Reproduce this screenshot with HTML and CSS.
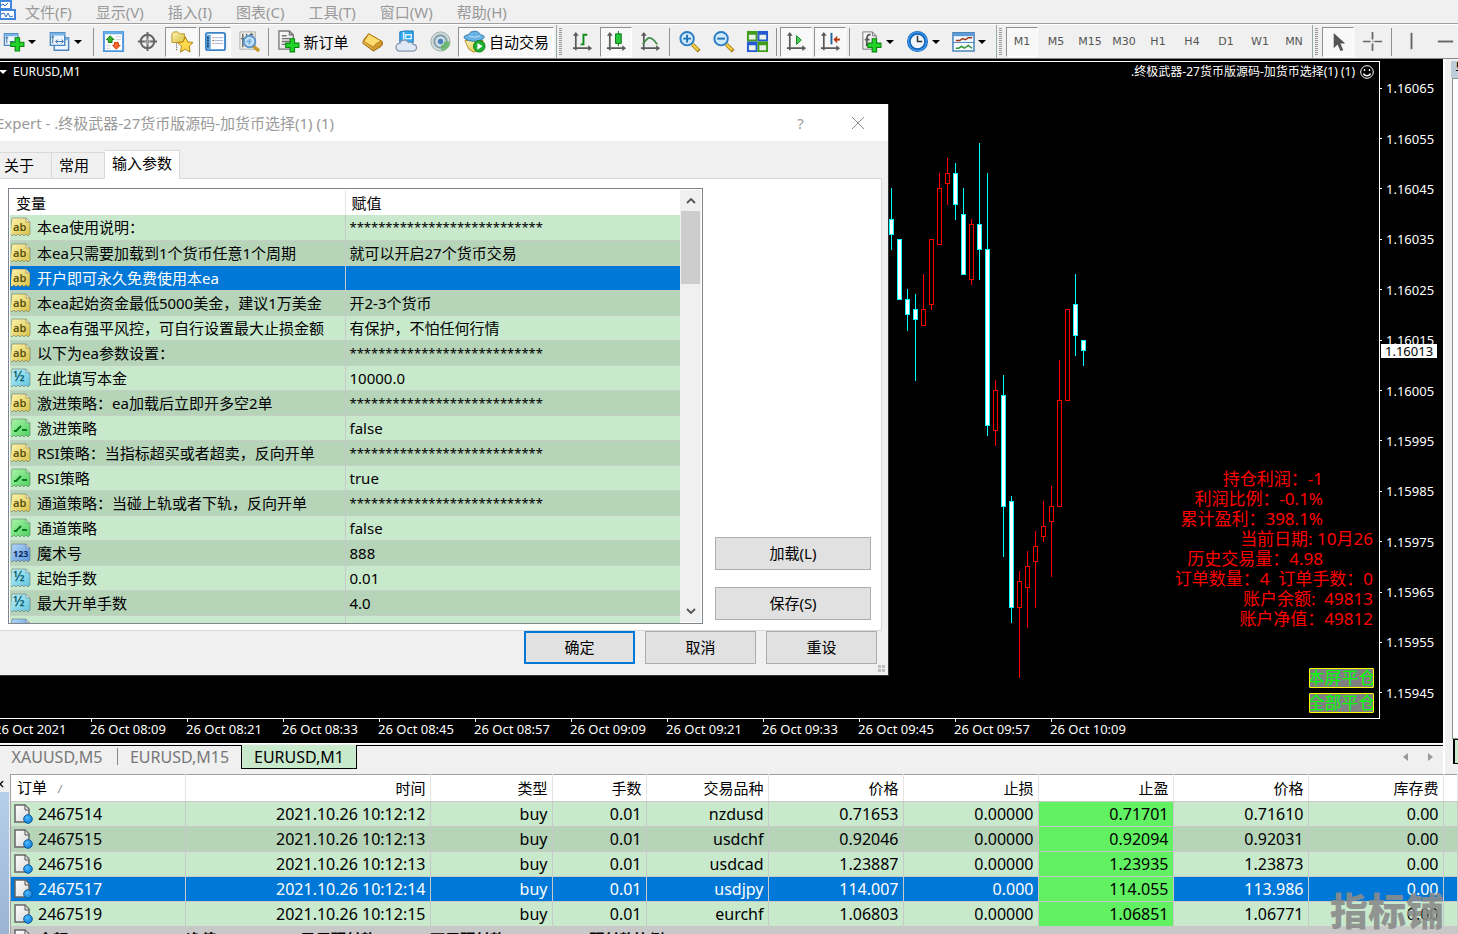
FILE: index.html
```html
<!DOCTYPE html>
<html lang="zh-CN">
<head>
    <meta charset="UTF-8">
    <meta name="viewport" content="width=device-width, initial-scale=1.0">
    <title>EURUSD,M1</title>
    <link rel="stylesheet" href="styles.css">
</head>
<body>

<!-- Icon set -->
<svg class="icon-defs" aria-hidden="true">
    <defs>
        <linearGradient id="g-yellow" x1="0" y1="0" x2="1" y2="1"><stop offset="0" stop-color="#fdf6b0"/><stop offset="1" stop-color="#d9bf45"/></linearGradient>
        <linearGradient id="g-cyan" x1="0" y1="0" x2="1" y2="1"><stop offset="0" stop-color="#c4f3fa"/><stop offset="1" stop-color="#5fc3dc"/></linearGradient>
        <linearGradient id="g-green" x1="0" y1="0" x2="1" y2="1"><stop offset="0" stop-color="#aef7ae"/><stop offset="1" stop-color="#4ccf5c"/></linearGradient>
        <linearGradient id="g-blue" x1="0" y1="0" x2="1" y2="1"><stop offset="0" stop-color="#b5dafa"/><stop offset="1" stop-color="#5a93da"/></linearGradient>
        <linearGradient id="g-gold" x1="0" y1="0" x2="1" y2="1"><stop offset="0" stop-color="#ffe27a"/><stop offset="1" stop-color="#c07f10"/></linearGradient>
        <radialGradient id="g-ball" cx=".4" cy=".35" r=".7"><stop offset="0" stop-color="#4fbcff"/><stop offset="1" stop-color="#0a7ad8"/></radialGradient>
        <linearGradient id="g-paper" x1="0" y1="0" x2="1" y2="1"><stop offset="0" stop-color="#fff"/><stop offset="1" stop-color="#d8d8d8"/></linearGradient>
    </defs>
    <symbol id="i-scrap" viewBox="0 0 20 20">
        <path d="M1 1h14l4 4v12l-2 2-2-2-2 2-2-2-2 2-2-2-2 2-2-2-2 2-2-2z" stroke-opacity=".45" stroke="#555"/>
        <path d="M15 1v4h4" fill="#fff" fill-opacity=".4" stroke="#555" stroke-opacity=".4"/>
    </symbol>
    <symbol id="i-bool" viewBox="0 0 20 20"><use href="#i-scrap" fill="url(#g-green)"/><path d="M3 13h2l5-5M11 12h5" fill="none" stroke="#0a7a1c" stroke-width="2"/></symbol>
    <symbol id="i-order" viewBox="0 0 20 20">
        <path d="M1 1h10l4 4v13H1z" fill="url(#g-paper)" stroke="#666" stroke-width="1.500"/><path d="M11 1v5h4" fill="#ddd" stroke="#555"/>
        <circle cx="14" cy="15" r="4.300" fill="url(#g-ball)" stroke="#0c5c9c"/>
    </symbol>
    <symbol id="i-plus" viewBox="0 0 14 14"><path d="M5 1h4v4h4v4H9v4H5V9H1V5h4z" fill="#22d32a" stroke="#08860f"/></symbol>
    <symbol id="i-caret" viewBox="0 0 8 4"><path d="M0 0h8L4 4z" fill="#000"/></symbol>
    <symbol id="i-axes" viewBox="0 0 24 24"><path d="M5 4v17M2 19h18" fill="none" stroke="#5a5a5a" stroke-width="1.800"/><path d="M2 6l3-4 3 4zM18 16l4 3-4 3z" fill="#5a5a5a"/></symbol>
    <symbol id="i-lens" viewBox="0 0 24 24"><path d="M15 15l7 7" stroke="#9c7312" stroke-width="4"/><path d="M15 15l6 6" stroke="#f5cf3e" stroke-width="2.400"/><circle cx="9.500" cy="9" r="7" fill="#cdeafd" stroke="#2b7cc4" stroke-width="2"/></symbol>
    <symbol id="i-frame" viewBox="0 0 18 16"><path d="M1 1h16v14H1z" fill="#eef6ff" stroke="#4d86bd" stroke-width="1.600"/><path d="M1 2.500h16" stroke="#78b4ea" stroke-width="3"/></symbol>
</svg>

<nav class="menubar">
    <svg class="app-logo" viewBox="0 0 16 20"><path d="M0 1h11v8H0zM0 10h15v9H0z" fill="#fff" stroke="#3f86dc" stroke-width="2"/><path d="M0 6l3-2 2 2 3-3M1 14l3-1 2 4 2-4 2 4 3-1" fill="none" stroke="#2f74cc"/></svg>
    <button>文件(F)</button>
    <button>显示(V)</button>
    <button>插入(I)</button>
    <button>图表(C)</button>
    <button>工具(T)</button>
    <button>窗口(W)</button>
    <button>帮助(H)</button>
</nav>

<div class="toolbar">
    <button class="tool drop" aria-label="新图表"><svg viewBox="0 0 24 24"><use href="#i-frame" x="1" y="3" width="17" height="14"/><path d="M5 7v7M4 9l1-2 1 2M8 12h5" stroke="#3b6f9f" fill="none"/><use href="#i-plus" x="8" y="7" width="16" height="16"/></svg><svg class="caret"><use href="#i-caret"/></svg></button>
    <button class="tool drop" aria-label="图表配置"><svg viewBox="0 0 24 24"><use href="#i-frame" x="5" y="7" width="18" height="15"/><use href="#i-frame" x="1" y="2" width="18" height="15"/><path d="M5 6v8M4 8l1-2 1 2M8 12h8M10 10l-2 2 2 2M14 10l2 2-2 2" stroke="#3b6f9f" fill="none"/></svg><svg class="caret"><use href="#i-caret"/></svg></button>
    <span class="sep"></span>
    <button class="tool" aria-label="市场报价"><svg viewBox="0 0 24 24"><path d="M2 2h20v20H2z" fill="#fff" stroke="#4d96dc" stroke-width="2"/><path d="M2 3h20" stroke="#66aeea" stroke-width="3"/><path d="M14 7h6M14 10h6M4 16h5M4 19h5" stroke="#ccc"/><path d="M8.500 6l4 4h-2v3h-4v-3h-2z" fill="#36b329" stroke="#177b10"/><path d="M15 20l-4-4h2v-3h4v3h2z" fill="#ff6a2a" stroke="#c93b08"/></svg></button>
    <button class="tool" aria-label="数据窗口"><svg viewBox="0 0 24 24"><circle cx="12" cy="12" r="7" fill="none" stroke="#666" stroke-width="2.200"/><path d="M12 2v20M2 12h20" stroke="#666" stroke-width="2"/><path d="M12 9v6M9 12h6" stroke="#aaa"/></svg></button>
    <button class="tool on" aria-label="导航"><svg viewBox="0 0 24 24"><path d="M2 4l2-2h4l2 2h5v9H2z" fill="url(#g-yellow)" stroke="#b99521"/><path d="M7 14v8" stroke="#333" stroke-dasharray="1 1"/><path d="M16 7l2.500 5.500 5.500.5-4 4 1 6-5-3-5 3 1-6-4-4 5.500-.5z" fill="#ffd94a" stroke="#a87b10"/></svg></button>
    <button class="tool on" aria-label="终端"><svg viewBox="0 0 24 24"><rect x="2" y="3" width="20" height="18" rx="2" fill="#fff" stroke="#3d85c8" stroke-width="2"/><path d="M2 5h5v15H3z" fill="#5fa3de"/><path d="M4 7v11" stroke="#174672" stroke-width="2" stroke-dasharray="2 1"/><path d="M11 8h9M11 11h9M11 14h9" stroke="#aab4d8"/><path d="M9 8h1M9 14h1" stroke="#e22"/><path d="M9 11h1" stroke="#111"/></svg></button>
    <button class="tool" aria-label="策略测试"><svg viewBox="0 0 24 24"><path d="M2 2h16v18H2z" fill="#f2f2ee" stroke="#aaa"/><path d="M5 4v14M9 4v5M14 3v6M3 9h5M12 5h4" stroke="#666" stroke-width="1.500"/><path d="M15 16l7 6" stroke="#c99a24" stroke-width="3.500"/><circle cx="12" cy="12" r="6" fill="#bde0fa" fill-opacity=".85" stroke="#5b96ca" stroke-width="2"/><path d="M9 12h5M12 9v6" stroke="#79aeda" stroke-width="2"/></svg></button>
    <span class="sep"></span>
    <button class="tool text order"><svg viewBox="0 0 24 24"><path d="M2 1h11l4 4v15H2z" fill="url(#g-paper)" stroke="#777" stroke-width="1.400"/><path d="M13 1v4h4M5 6h5M5 9h9M5 12h9M5 15h5" fill="none" stroke="#777" stroke-width="1.400"/><use href="#i-plus" x="8" y="8" width="16" height="16"/></svg>新订单</button>
    <button class="tool" aria-label="MetaEditor"><svg viewBox="0 0 24 24"><path d="M8 4l14 8c1 2 0 4-1 5l-8 5L2 14c0-1 0-3 1-4z" fill="url(#g-gold)" stroke="#9a6206"/><path d="M8 4l-5 8 10 6c1-3 5-6 9-6z" fill="#ffdc70" stroke="#b37a10"/></svg></button>
    <button class="tool" aria-label="社区"><svg viewBox="0 0 24 24"><path d="M5 2l5-1h9v12H5z" fill="#35a8ef" stroke="#1777b8"/><path d="M9 2v10M11 5h6v4h-6z" stroke="#d9f1ff" fill="none" stroke-width="1.500"/><path d="M5 22a4 4 0 0 1 0-8 5 5 0 0 1 9-1 4 4 0 0 1 5 2 3.500 3.500 0 0 1 0 7z" fill="#dfe8f5" stroke="#8594b0" stroke-width="1.300"/></svg></button>
    <button class="tool" aria-label="信号"><svg viewBox="0 0 24 24"><circle cx="12" cy="12" r="10" fill="#d5dcd9" stroke="#9aaeae"/><circle cx="12" cy="12" r="6.500" fill="none" stroke="#7f9fae" stroke-width="2"/><path d="M12 12l1 10a10 10 0 0 0 9-10z" fill="#5bb55d" fill-opacity=".8"/><circle cx="12" cy="12" r="3.500" fill="#4b80ba" stroke="#d8ebf5"/></svg></button>
    <button class="tool text on auto"><svg viewBox="0 0 24 24"><path d="M2 11h19l-3 10-7 2-5-3z" fill="url(#g-yellow)" stroke="#b58b22"/><path d="M1 8c0-2 3-3 5-3 1-5 11-5 12 0 3 0 5 2 4 3-4 5-17 5-21 0z" fill="#69b3e4" stroke="#3578ac"/><path d="M6 6c4 2 8 2 12 0" fill="none" stroke="#bde4fb"/><circle cx="17" cy="17" r="6" fill="#1fae2e" stroke="#0c7d18"/><path d="M15 13.500v7l5.500-3.500z" fill="#fff"/></svg>自动交易</button>
    <span class="group-end"></span><span class="grip"></span>
    <button class="tool" aria-label="柱状图"><svg viewBox="0 0 24 24"><use href="#i-axes"/><path d="M13 16V5h4M10 15h3" fill="none" stroke="#0d8a1b" stroke-width="2"/></svg></button>
    <button class="tool on" aria-label="蜡烛图"><svg viewBox="0 0 24 24"><use href="#i-axes"/><path d="M14 1v16" stroke="#0a7a16"/><path d="M11 4h6v10h-6z" fill="#28c73b" stroke="#0a7a16"/></svg></button>
    <button class="tool" aria-label="折线图"><svg viewBox="0 0 24 24"><use href="#i-axes"/><path d="M4 15c5-8 8-10 15 0" fill="none" stroke="#3f8d45" stroke-width="1.800"/></svg></button>
    <span class="sep"></span>
    <button class="tool" aria-label="放大"><svg viewBox="0 0 24 24"><use href="#i-lens"/><path d="M5.500 9h8M9.500 5v8" stroke="#2371b5" stroke-width="2"/></svg></button>
    <button class="tool" aria-label="缩小"><svg viewBox="0 0 24 24"><use href="#i-lens"/><path d="M5.500 9h8" stroke="#2371b5" stroke-width="2"/></svg></button>
    <button class="tool" aria-label="平铺"><svg viewBox="0 0 24 24"><path d="M1 1h11v11H1z" fill="#3f9d18"/><path d="M12 1h11v11H12z" fill="#2459d2"/><path d="M1 12h11v11H1z" fill="#2459d2"/><path d="M12 12h11v11H12z" fill="#3f9d18"/><path d="M3 5h7v5H3zM14 5h7v5h-7zM3 16h7v5H3zM14 16h7v5h-7z" fill="#e8f2e8"/></svg></button>
    <span class="sep"></span>
    <button class="tool on" aria-label="自动滚动"><svg viewBox="0 0 24 24"><use href="#i-axes"/><path d="M12 6v9l5-4.500z" fill="#4fca5a" stroke="#0d8a1b"/></svg></button>
    <button class="tool on" aria-label="图表平移"><svg viewBox="0 0 24 24"><use href="#i-axes"/><path d="M13 3v12" stroke="#22669c" stroke-width="2"/><path d="M22 10h-5" stroke="#b53a11" stroke-width="2"/><path d="M15 10l4-4v8z" fill="#b53a11"/></svg></button>
    <span class="sep"></span>
    <div class="dropdowns">
        <button class="tool drop" aria-label="指标"><svg viewBox="0 0 24 24"><path d="M3 2h10l4 4v14H3z" fill="url(#g-paper)" stroke="#777"/><path d="M13 2v4h4" fill="none" stroke="#777"/><path d="M11 5c-4-1-4 3-4 12M5 10h5" fill="none" stroke="#555" stroke-width="1.800"/><use href="#i-plus" x="7" y="8" width="16" height="16"/></svg><svg class="caret"><use href="#i-caret"/></svg></button>
        <button class="tool drop" aria-label="周期"><svg viewBox="0 0 24 24"><circle cx="12" cy="12" r="9" fill="#f2f7fc" stroke="#1464b8" stroke-width="4"/><circle cx="12" cy="12" r="9.500" fill="none" stroke="#3b9af0" stroke-width="1.500"/><path d="M12 6v6h5" fill="none" stroke="#333" stroke-width="1.600"/></svg><svg class="caret"><use href="#i-caret"/></svg></button>
        <button class="tool drop" aria-label="模板"><svg viewBox="0 0 24 24"><path d="M1 3h22v19H1z" fill="#f6faff" stroke="#4a86bd" stroke-width="1.600"/><path d="M1 5h22" stroke="#5c9bd6" stroke-width="3"/><path d="M1 13h22" stroke="#4a86bd"/><path d="M4 11h4l3-2 3 1 3-2h4" fill="none" stroke="#a33518" stroke-width="1.500"/><path d="M4 19h3l3-2 3 2 4-3 4 3" fill="none" stroke="#2f9337" stroke-width="1.500"/></svg><svg class="caret"><use href="#i-caret"/></svg></button>
    </div>
    <span class="group-end"></span><span class="grip"></span>
    <button class="tool period on">M1</button>
    <button class="tool period">M5</button>
    <button class="tool period">M15</button>
    <button class="tool period">M30</button>
    <button class="tool period">H1</button>
    <button class="tool period">H4</button>
    <button class="tool period">D1</button>
    <button class="tool period">W1</button>
    <button class="tool period">MN</button>
    <span class="group-end"></span><span class="grip"></span>
    <button class="tool on" aria-label="光标"><svg viewBox="0 0 24 24"><path d="M7 3v16l4-4 3 7 3-1-3-7h5z" fill="#555"/></svg></button>
    <button class="tool" aria-label="十字准线"><svg viewBox="0 0 24 24"><path d="M12 2v8M12 14v8M2 12h8M14 12h8M12 12h1" stroke="#666" stroke-width="1.800"/></svg></button>
    <span class="sep"></span>
    <button class="tool" aria-label="垂直线"><svg viewBox="0 0 24 24"><path d="M12 3v17" stroke="#666" stroke-width="2"/></svg></button>
    <button class="tool" aria-label="水平线"><svg viewBox="0 0 24 24"><path d="M4 12h16" stroke="#666" stroke-width="2"/></svg></button>
</div>

<main class="workspace">
    <div class="charts">
        <section class="chart">
            <div class="plot">
                <svg id="candles" class="candles"></svg>
                <header class="plot-head">
                    <span class="symbol"><svg viewBox="0 0 8 4"><path d="M0 0h8L4 4z" fill="#fff"/></svg>EURUSD,M1</span>
                    <span class="expert">.终极武器-27货币版源码-加货币选择(1) (1)<svg viewBox="0 0 14 14"><circle cx="7" cy="7" r="6.300" fill="none" stroke="#fff"/><path d="M4.500 4v2M9.500 4v2M3.500 8.500c1 3 6 3 7 0" fill="none" stroke="#fff" stroke-width="1.300"/></svg></span>
                </header>
                <ul class="stats">
                    <li class="inset">持仓利润：-1</li>
                    <li class="inset">利润比例：-0.1%</li>
                    <li class="inset">累计盈利：398.1%</li>
                    <li>当前日期: 10月26</li>
                    <li class="inset">历史交易量：4.98</li>
                    <li>订单数量：4&nbsp; 订单手数：0</li>
                    <li>账户余额:&nbsp; 49813</li>
                    <li>账户净值：49812</li>
                </ul>
                <div class="close-buttons">
                    <button>本屏平仓</button>
                    <button>全部平仓</button>
                </div>
            </div>
            <ul class="price-axis">
                <li>1.16065</li><li>1.16055</li><li>1.16045</li><li>1.16035</li><li>1.16025</li><li>1.16015</li><li>1.16005</li>
                <li>1.15995</li><li>1.15985</li><li>1.15975</li><li>1.15965</li><li>1.15955</li><li>1.15945</li>
                <li class="bid">1.16013</li>
            </ul>
            <ul class="time-axis">
                <li>26 Oct 2021</li><li>26 Oct 08:09</li><li>26 Oct 08:21</li><li>26 Oct 08:33</li><li>26 Oct 08:45</li><li>26 Oct 08:57</li>
                <li>26 Oct 09:09</li><li>26 Oct 09:21</li><li>26 Oct 09:33</li><li>26 Oct 09:45</li><li>26 Oct 09:57</li><li>26 Oct 10:09</li>
            </ul>
        </section>
        <div class="chart-tabs">
            <button>XAUUSD,M5</button>
            <button>EURUSD,M15</button>
            <button class="active">EURUSD,M1</button>
            <div class="tab-scroll">
                <svg viewBox="0 0 5 8"><path d="M5 0v8L0 4z" fill="#999"/></svg>
                <svg viewBox="0 0 5 8"><path d="M0 0v8l5-4z" fill="#999"/></svg>
            </div>
        </div>
    </div>
    <aside class="navigator">
        <div class="navigator-title">导航</div>
        <div class="navigator-body"></div>
        <div class="navigator-tab"></div>
    </aside>

    <section class="dialog" role="dialog" aria-label="Expert">
        <header class="dialog-title">
            <span>Expert - .终极武器-27货币版源码-加货币选择(1) (1)</span>
            <button aria-label="帮助">?</button>
            <button aria-label="关闭"><svg viewBox="0 0 12 12"><path d="M0 0l12 12M12 0L0 12" stroke="#8a8a8a"/></svg></button>
        </header>
        <div class="dialog-tabs">
            <button>关于</button>
            <button>常用</button>
            <button class="active">输入参数</button>
        </div>
        <div class="dialog-page">
            <div class="inputs">
                <table>
                    <colgroup><col class="c-name"><col></colgroup>
                    <thead><tr><th>变量</th><th>赋值</th></tr></thead>
                    <tbody>
                        <tr><td><svg class="ab"><use href="#i-scrap"/><text x="2" y="14">ab</text></svg>本ea使用说明：</td><td class="stars">***************************</td></tr>
                        <tr><td><svg class="ab"><use href="#i-scrap"/><text x="2" y="14">ab</text></svg>本ea只需要加载到1个货币任意1个周期</td><td>就可以开启27个货币交易</td></tr>
                        <tr class="selected"><td><svg class="ab"><use href="#i-scrap"/><text x="2" y="14">ab</text></svg>开户即可永久免费使用本ea</td><td></td></tr>
                        <tr><td><svg class="ab"><use href="#i-scrap"/><text x="2" y="14">ab</text></svg>本ea起始资金最低5000美金，建议1万美金</td><td>开2-3个货币</td></tr>
                        <tr><td><svg class="ab"><use href="#i-scrap"/><text x="2" y="14">ab</text></svg>本ea有强平风控，可自行设置最大止损金额</td><td>有保护，不怕任何行情</td></tr>
                        <tr><td><svg class="ab"><use href="#i-scrap"/><text x="2" y="14">ab</text></svg>以下为ea参数设置：</td><td class="stars">***************************</td></tr>
                        <tr><td><svg class="half"><use href="#i-scrap"/><text x="2" y="13">½</text></svg>在此填写本金</td><td>10000.0</td></tr>
                        <tr><td><svg class="ab"><use href="#i-scrap"/><text x="2" y="14">ab</text></svg>激进策略：ea加载后立即开多空2单</td><td class="stars">***************************</td></tr>
                        <tr><td><svg><use href="#i-bool"/></svg>激进策略</td><td>false</td></tr>
                        <tr><td><svg class="ab"><use href="#i-scrap"/><text x="2" y="14">ab</text></svg>RSI策略：当指标超买或者超卖，反向开单</td><td class="stars">***************************</td></tr>
                        <tr><td><svg><use href="#i-bool"/></svg>RSI策略</td><td>true</td></tr>
                        <tr><td><svg class="ab"><use href="#i-scrap"/><text x="2" y="14">ab</text></svg>通道策略：当碰上轨或者下轨，反向开单</td><td class="stars">***************************</td></tr>
                        <tr><td><svg><use href="#i-bool"/></svg>通道策略</td><td>false</td></tr>
                        <tr><td><svg class="int"><use href="#i-scrap"/><text x="2" y="14">123</text></svg>魔术号</td><td>888</td></tr>
                        <tr><td><svg class="half"><use href="#i-scrap"/><text x="2" y="13">½</text></svg>起始手数</td><td>0.01</td></tr>
                        <tr><td><svg class="half"><use href="#i-scrap"/><text x="2" y="13">½</text></svg>最大开单手数</td><td>4.0</td></tr>
                        <tr><td><svg class="int"><use href="#i-scrap"/></svg></td><td></td></tr>
                    </tbody>
                </table>
                <div class="scrollbar">
                    <svg viewBox="0 0 10 6"><path d="M1 5l4-4 4 4" fill="none" stroke="#555" stroke-width="1.800"/></svg>
                    <span class="thumb"></span>
                    <svg viewBox="0 0 10 6"><path d="M1 1l4 4 4-4" fill="none" stroke="#555" stroke-width="1.800"/></svg>
                </div>
            </div>
            <div class="side-buttons">
                <button class="btn">加载(L)</button>
                <button class="btn">保存(S)</button>
            </div>
        </div>
        <footer class="dialog-buttons">
            <button class="btn default">确定</button>
            <button class="btn">取消</button>
            <button class="btn">重设</button>
        </footer>
        <svg class="size-grip" viewBox="0 0 8 8"><path d="M0 0h3v3H0zM4 0h3v3H4zM0 4h3v3H0zM4 4h3v3H4z" fill="#bfbfbf"/></svg>
    </section>
</main>

<section class="terminal">
    <div class="terminal-side"><button aria-label="关闭"><svg viewBox="0 0 8 8"><path d="M0 0l7 7M7 0L0 7" stroke="#000" stroke-width="1.500"/></svg></button><span></span></div>
    <table class="orders">
        <colgroup><col class="w-order"><col class="w-time"><col class="w-type"><col class="w-lots"><col class="w-type"><col class="w-price"><col class="w-price"><col class="w-price"><col class="w-price"><col class="w-price"><col></colgroup>
        <thead>
            <tr><th>订单<i>/</i></th><th>时间</th><th>类型</th><th>手数</th><th>交易品种</th><th>价格</th><th>止损</th><th>止盈</th><th>价格</th><th>库存费</th><th></th></tr>
        </thead>
        <tbody>
            <tr><td><svg><use href="#i-order"/></svg>2467514</td><td>2021.10.26 10:12:12</td><td>buy</td><td>0.01</td><td>nzdusd</td><td>0.71653</td><td>0.00000</td><td class="tp">0.71701</td><td>0.71610</td><td>0.00</td><td></td></tr>
            <tr><td><svg><use href="#i-order"/></svg>2467515</td><td>2021.10.26 10:12:13</td><td>buy</td><td>0.01</td><td>usdchf</td><td>0.92046</td><td>0.00000</td><td class="tp">0.92094</td><td>0.92031</td><td>0.00</td><td></td></tr>
            <tr><td><svg><use href="#i-order"/></svg>2467516</td><td>2021.10.26 10:12:13</td><td>buy</td><td>0.01</td><td>usdcad</td><td>1.23887</td><td>0.00000</td><td class="tp">1.23935</td><td>1.23873</td><td>0.00</td><td></td></tr>
            <tr class="selected"><td><svg><use href="#i-order"/></svg>2467517</td><td>2021.10.26 10:12:14</td><td>buy</td><td>0.01</td><td>usdjpy</td><td>114.007</td><td>0.000</td><td class="tp">114.055</td><td>113.986</td><td>0.00</td><td></td></tr>
            <tr><td><svg><use href="#i-order"/></svg>2467519</td><td>2021.10.26 10:12:15</td><td>buy</td><td>0.01</td><td>eurchf</td><td>1.06803</td><td>0.00000</td><td class="tp">1.06851</td><td>1.06771</td><td>0.00</td><td></td></tr>
        </tbody>
        <tfoot>
            <tr><td colspan="11"><svg><use href="#i-order"/></svg>余额: 49 813.11 USD&nbsp; 净值: 49 811.99&nbsp; 已用预付款: 50.00&nbsp; 可用预付款: 49 761.99&nbsp; 预付款比例: 99623.78%</td></tr>
        </tfoot>
    </table>
    <div class="watermark">指标铺</div>
</section>

<script>
// x, high, body top, body bottom, low, direction
const candles = [
    [891, 126, 157, 173, 188, "down"],
    [899, 177, 177, 238, 238, "down"],
    [907, 227, 237, 253, 269, "down"],
    [915, 232, 247, 258, 319, "down"],
    [923, 212, 247, 264, 264, "up"],
    [931, 177, 177, 243, 248, "up"],
    [939, 111, 126, 183, 183, "up"],
    [947, 96, 111, 122, 143, "up"],
    [955, 101, 111, 143, 158, "down"],
    [963, 126, 152, 213, 213, "down"],
    [971, 157, 162, 218, 223, "up"],
    [979, 81, 162, 188, 218, "down"],
    [987, 111, 187, 364, 374, "down"],
    [995, 318, 328, 369, 384, "up"],
    [1003, 313, 333, 445, 495, "down"],
    [1011, 434, 439, 546, 561, "down"],
    [1019, 509, 519, 546, 616, "up"],
    [1027, 489, 504, 526, 566, "up"],
    [1035, 469, 484, 500, 546, "up"],
    [1043, 439, 464, 475, 480, "up"],
    [1051, 424, 444, 460, 515, "up"],
    [1059, 298, 338, 445, 445, "up"],
    [1067, 247, 247, 339, 339, "up"],
    [1075, 212, 242, 274, 294, "down"],
    [1083, 278, 278, 289, 304, "down"]
];

function drawCandles() {
    let shapes = "";
    candles.forEach(([x, high, top, bottom, low, dir]) => {
        shapes += `<g class="${dir}"><path d="M${x + 0.5} ${high}V${low}"/><rect x="${x - 1.5}" y="${top + 0.5}" width="4" height="${bottom - top - 1}"/></g>`;
    });
    document.getElementById("candles").innerHTML = shapes;
}

drawCandles();
</script>

</body>
</html>
```
FILE: styles.css
```css
* {
    box-sizing: border-box;
}
body {
    margin: 0;
    height: 100vh;
    display: flex;
    flex-direction: column;
    overflow: hidden;
    background: #f0f0f0;
    color: #000;
    font-family: "Noto Sans", "Noto Sans CJK SC", sans-serif;
    font-size: 15px;
    line-height: 20px;
}
button {
    margin: 0;
    padding: 0;
    border: none;
    background: none;
    color: inherit;
    font: inherit;
    white-space: nowrap;
}
ul {
    margin: 0;
    padding: 0;
    list-style: none;
}
.icon-defs {
    position: absolute;
    width: 0;
    height: 0;
}

/* Menu */
.menubar {
    display: flex;
    flex: none;
    gap: 24px;
    height: 24px;
    border-bottom: 1px solid #a0a0a0;
    color: #999;
}
.app-logo {
    width: 16px;
    height: 20px;
    margin-right: -15px;
}

/* Toolbar */
.toolbar {
    display: flex;
    flex: none;
    align-items: center;
    gap: 2px;
    height: 35px;
    border-top: 1px solid #fff;
    border-bottom: 1px solid #888;
    overflow: hidden;
}
.tool {
    display: flex;
    flex: none;
    align-items: center;
    justify-content: center;
    width: 32px;
    height: 30px;
}
.tool svg {
    flex: none;
    width: 23px;
    height: 23px;
}
.tool.on {
    border: 1px solid;
    border-color: #909090 #fff #fff #909090;
    background: #f8f8f8;
}
.tool.drop {
    justify-content: flex-start;
    gap: 3px;
    width: 44px;
    padding-left: 2px;
}
.tool .caret {
    width: 8px;
    height: 4px;
}
.tool.text {
    gap: 3px;
}
.order {
    width: 82px;
}
.auto {
    width: 96px;
}
.tool.period {
    color: #555;
    font-family: "DejaVu Sans", sans-serif;
    font-size: 11px;
}
.dropdowns {
    display: flex;
    flex: none;
    gap: 2px;
    padding-left: 5px;
}
.sep {
    flex: none;
    width: 1px;
    height: 28px;
    margin: 0 1px;
    background: #909090;
}
.group-end {
    flex: none;
    width: 1px;
    height: 34px;
    background: #9aaa9c;
}
.grip {
    flex: none;
    width: 3px;
    height: 28px;
    margin-right: 2px;
    background: repeating-linear-gradient(#999 0 1px, #f0f0f0 1px 2px);
}

/* Workspace */
.workspace {
    position: relative;
    display: flex;
    flex: 1;
    min-height: 0;
}
.charts {
    display: flex;
    flex: 1;
    flex-direction: column;
    min-width: 0;
}
.chart {
    display: grid;
    flex: 1;
    grid-template-columns: 1fr 63px;
    grid-template-rows: 1fr 24px;
    min-height: 0;
    padding-top: 2px;
    background: #000;
    color: #fff;
    font-size: 13px;
    overflow: hidden;
}
.plot {
    position: relative;
    display: flex;
    flex-direction: column;
    align-items: flex-end;
    min-height: 0;
    padding: 0 5px 5px 0;
    border: solid #fff;
    border-width: 1px 1px 1px 0;
}
.candles {
    position: absolute;
    inset: 0;
    width: 100%;
    height: 100%;
}
.candles .down {
    stroke: #0ff;
    fill: #fff;
}
.candles .up {
    stroke: #f00;
    fill: #000;
}
.plot-head {
    display: flex;
    justify-content: space-between;
    width: 100%;
    font-size: 12px;
}
.symbol svg {
    width: 8px;
    height: 4px;
    margin: 0 6px 2px -1px;
}
.expert svg {
    width: 14px;
    height: 14px;
    margin-left: 5px;
    vertical-align: -3px;
}
.stats {
    margin-top: auto;
    padding-right: 1px;
    color: #f00;
    font-size: 17px;
    line-height: 20px;
    text-align: right;
}
.stats .inset {
    padding-right: 50px;
}
.close-buttons {
    display: flex;
    flex-direction: column;
    gap: 5px;
    margin-top: 39px;
}
.close-buttons button {
    display: flex;
    justify-content: center;
    width: 65px;
    height: 20px;
    border: 1px solid #ff0;
    border-radius: 1px;
    background: #808080;
    color: #0f0;
    font-size: 17px;
    line-height: 18px;
    overflow: hidden;
}
.price-axis {
    position: relative;
    display: flex;
    flex-direction: column;
    padding: 2px 0 1px;
}
.price-axis li {
    display: flex;
    flex: 1;
    align-items: center;
    gap: 4px;
}
.price-axis li::before {
    content: "";
    width: 2px;
    height: 1px;
    background: #fff;
}
.price-axis .bid {
    position: absolute;
    top: 43%;
    left: 1px;
    padding: 0 4px;
    height: 14px;
    background: #fff;
    color: #000;
}
.price-axis .bid::before {
    display: none;
}
.time-axis {
    display: flex;
    grid-column: 1 / -1;
    margin-left: -6px;
    line-height: 21px;
}
.time-axis li {
    position: relative;
    flex: none;
    width: 96px;
    white-space: nowrap;
}
.time-axis li::before {
    position: absolute;
    top: 0;
    left: 1px;
    width: 1px;
    height: 3px;
    background: #fff;
    content: "";
}
.chart-tabs {
    display: flex;
    flex: none;
    height: 31px;
    padding-bottom: 5px;
    border-top: 1px solid #fff;
    background: linear-gradient(#000 0 0) 0 1px / 100% 1px no-repeat, #f0f0f0;
    color: #777;
    font-size: 16px;
}
.chart-tabs button {
    width: 123px;
}
.chart-tabs button:first-child {
    width: 118px;
    padding-right: 4px;
    border: solid transparent;
    border-width: 4px 0;
    background: linear-gradient(#888 0 0) right / 1px 100% no-repeat;
    background-clip: padding-box;
    line-height: 16px;
}
.chart-tabs .active {
    width: 116px;
    margin-top: 1px;
    border: 1px solid #000;
    border-top: none;
    background: #c9e9cd;
    color: #000;
}
.tab-scroll {
    display: flex;
    gap: 20px;
    align-items: center;
    margin-left: auto;
    padding-right: 10px;
}
.tab-scroll svg {
    width: 5px;
    height: 8px;
}

/* Docked panel at the right edge */
.navigator {
    display: flex;
    flex: none;
    flex-direction: column;
    width: 15px;
    padding: 2px 0 10px 7px;
    border-left: 2px solid #fff;
    overflow: hidden;
}
.navigator-title {
    flex: none;
    height: 17px;
    margin-left: -1px;
    padding-left: 4px;
    background: #bfcddb;
    line-height: 14px;
    white-space: nowrap;
    overflow: hidden;
}
.navigator-body {
    flex: 1;
    border: solid #8a968c;
    border-width: 1px 0 1px 1px;
    background: #fff;
}
.navigator-tab {
    flex: none;
    height: 25px;
    margin-left: 1px;
    border: solid #000;
    border-width: 1px 0 1px 2px;
    background: #c9e9cd;
}

/* Expert dialog */
.dialog {
    position: absolute;
    top: 45px;
    left: -8px;
    width: 897px;
    border: solid #333;
    border-width: 0 1px 1px 0;
    background: #f0f0f0;
}
.dialog-title {
    display: flex;
    align-items: center;
    height: 37px;
    padding: 0 2px 0 4px;
    background: #fff;
    color: #999;
}
.dialog-title span {
    flex: 1;
}
.dialog-title button {
    width: 57px;
}
.dialog-title svg {
    width: 12px;
    height: 12px;
}
.dialog-tabs {
    display: flex;
    align-items: flex-end;
    height: 37px;
}
.dialog-tabs button {
    width: 53px;
    height: 26px;
    padding: 0 8px 2px 0;
    border: solid #d9d9d9;
    border-width: 1px 1px 0 0;
}
.dialog-tabs button:first-child {
    width: 60px;
    padding-left: 12px;
    text-align: left;
}
.dialog-tabs .active {
    width: 75px;
    height: 29px;
    margin-bottom: -1px;
    padding: 0 0 4px;
    background: #fff;
}
.dialog-page {
    display: flex;
    gap: 12px;
    margin-right: 6px;
    padding: 9px 10px 6px 16px;
    border: solid #d9d9d9;
    border-width: 1px 1px 1px 0;
    background: #fff;
}
.inputs {
    display: flex;
    flex: 1;
    height: 436px;
    padding: 1px;
    border: 1px solid #7f858c;
    background: #fff;
    overflow: hidden;
}
table {
    border-collapse: collapse;
    table-layout: fixed;
    line-height: 20px;
    white-space: nowrap;
}
th {
    font-weight: normal;
}
td svg {
    flex: none;
    width: 20px;
    height: 20px;
    margin-right: 6px;
    vertical-align: top;
}
svg.ab {
    fill: url(#g-yellow);
}
svg.half {
    fill: url(#g-cyan);
}
svg.int {
    fill: url(#g-blue);
}
.ab text {
    fill: #5c5210;
    font-size: 11px;
    font-weight: 600;
}
.half text {
    fill: #0d6472;
    font-size: 14px;
    font-weight: 600;
}
.int text {
    fill: #0b2b5c;
    font-size: 9px;
    font-weight: 700;
}
tbody tr {
    background: #c9e9cd;
}
tbody tr:nth-child(even) {
    background: #b5d4b8;
}
tbody tr.selected {
    background: #0078d7;
    color: #fff;
}
.inputs table {
    flex: 1;
    align-self: flex-start;
    width: 670px;
}
.c-name {
    width: 50%;
}
.inputs th {
    height: 25px;
    padding: 0 6px;
    border-right: 1px solid #e5e5e5;
    text-align: left;
}
.inputs td {
    height: 25px;
    padding: 2px 1px;
    border-right: 1px solid #c8c8c8;
    border-bottom: 1px solid #c4cfc5;
}
.inputs td + td {
    padding-left: 4px;
}
.inputs td.stars {
    font-size: 13px;
}
.inputs tr > :last-child {
    border-right: none;
}
.scrollbar {
    display: flex;
    flex: none;
    flex-direction: column;
    align-items: center;
    width: 21px;
    padding: 8px 0;
    background: #f0f0f0;
}
.scrollbar svg {
    width: 10px;
    height: 6px;
}
.thumb {
    width: 19px;
    height: 73px;
    margin: 7px 0 auto;
    background: #cdcdcd;
}
.side-buttons {
    display: flex;
    flex-direction: column;
    justify-content: flex-end;
    gap: 17px;
    padding-bottom: 4px;
}
.btn {
    width: 111px;
    height: 33px;
    padding-bottom: 2px;
    border: 1px solid #adadad;
    background: #e1e1e1;
}
.btn.default {
    border: 2px solid #0078d7;
}
.side-buttons .btn {
    width: 156px;
}
.dialog-buttons {
    display: flex;
    justify-content: flex-end;
    gap: 10px;
    padding: 0 11px 11px 0;
}
.size-grip {
    position: absolute;
    right: 2px;
    bottom: 2px;
    width: 8px;
    height: 8px;
}

/* Terminal */
.terminal {
    position: relative;
    display: flex;
    flex: none;
    height: 160px;
    overflow: hidden;
}
.terminal-side {
    display: flex;
    flex: none;
    flex-direction: column;
    width: 11px;
    border-right: 1px solid #a0a0a0;
}
.terminal-side button {
    height: 18px;
    padding-right: 8px;
    line-height: 8px;
}
.terminal-side svg {
    width: 7px;
    height: 7px;
    margin-left: -3px;
}
.terminal-side span {
    flex: 1;
    width: 9px;
    background: linear-gradient(#b8cfeb, #9ab3d2);
}
.orders {
    align-self: flex-start;
    flex: 1;
    width: 100%;
    border-top: 1px solid #a0a0a0;
}
.w-order {
    width: 174px;
}
.w-time {
    width: 245px;
}
.w-type {
    width: 122px;
}
.w-lots {
    width: 94px;
}
.w-price {
    width: 135px;
}
.orders th {
    height: 27px;
    padding: 0 4px 0 6px;
    border-right: 1px solid #e5e5e5;
    border-bottom: 1px solid #c8c8c8;
    background: #fff;
    text-align: right;
}
.orders th:first-child {
    text-align: left;
}
.orders th i {
    margin-left: 11px;
    color: #777;
    font-size: 10px;
}
.orders td {
    height: 25px;
    padding: 2px 4px;
    border-right: 1px solid #c8c8c8;
    border-bottom: 1px solid #c8c8c8;
    font-size: 16px;
    text-align: right;
}
.orders td:first-child {
    padding-left: 3px;
    text-align: left;
}
.orders td svg {
    margin-right: 4px;
}
.orders .tp {
    background: #62f162;
    color: #000;
}
.orders tfoot td {
    background: #c8c8c8;
    font-size: 15px;
    font-weight: bold;
}
.watermark {
    position: absolute;
    right: 14px;
    bottom: 6px;
    color: #8c8c8c;
    font-family: "Noto Sans CJK SC", sans-serif;
    font-size: 38px;
    font-weight: 900;
    line-height: 38px;
    opacity: 0.9;
}
```
